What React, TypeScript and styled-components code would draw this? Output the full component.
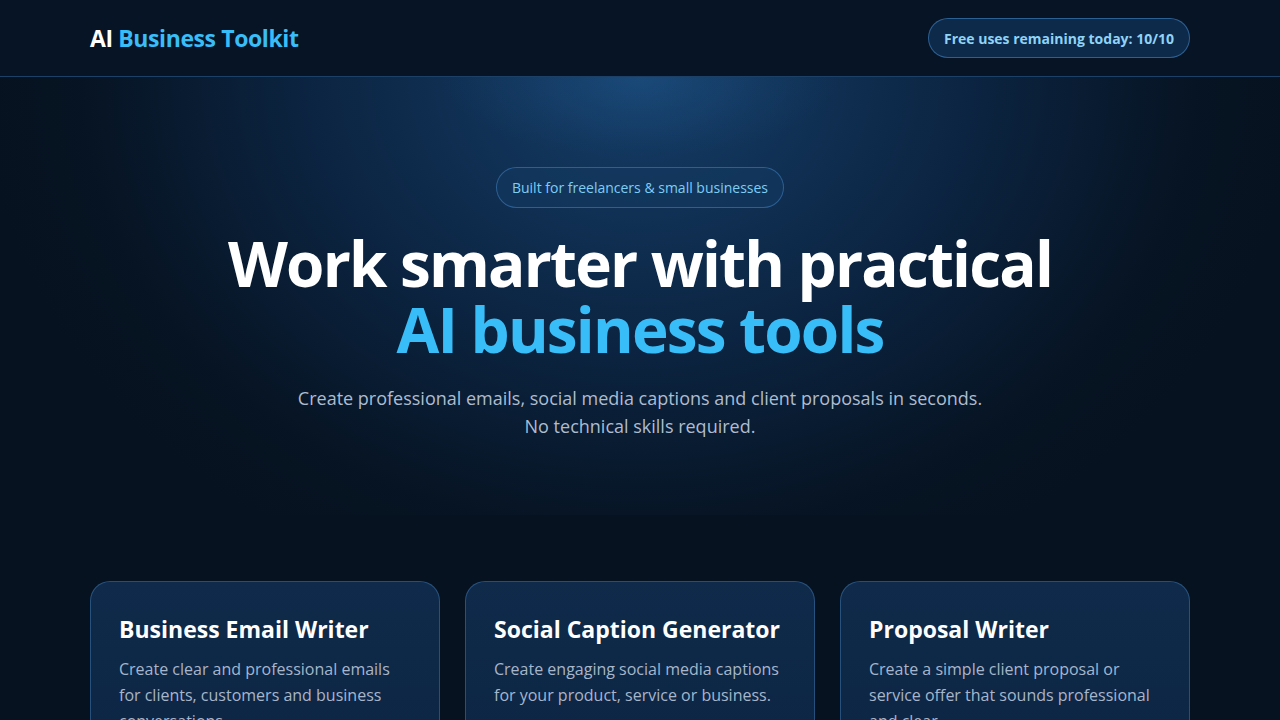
import styled, { createGlobalStyle } from 'styled-components';

const GlobalStyle = createGlobalStyle`
  * {
    box-sizing: border-box;
  }

  body {
    margin: 0;
    background: #06121f;
    font-family: 'Open Sans', 'Noto Sans', sans-serif;
    color: #ffffff;
  }
`;

const Page = styled.div`
  min-height: 100vh;
  background: #06121f;
`;

const Header = styled.header`
  height: 77px;
  background: #061425;
  border-bottom: 1px solid rgba(56, 120, 185, 0.45);
`;

const Container = styled.div`
  width: 1100px;
  margin: 0 auto;
`;

const HeaderInner = styled(Container)`
  height: 100%;
  display: flex;
  align-items: center;
  justify-content: space-between;
`;

const Logo = styled.div`
  font-size: 23px;
  font-weight: 700;
  letter-spacing: -0.4px;
  color: #ffffff;

  span {
    color: #38bdf8;
  }
`;

const UsesBadge = styled.div`
  height: 40px;
  padding: 0 15px;
  display: flex;
  align-items: center;
  border-radius: 999px;
  background: #0d2a4a;
  border: 1px solid rgba(72, 140, 205, 0.55);
  color: #8fd3f7;
  font-size: 14px;
  font-weight: 700;
`;

const Hero = styled.section`
  height: 438px;
  padding-top: 90px;
  display: flex;
  flex-direction: column;
  align-items: center;
  text-align: center;
  background:
    radial-gradient(ellipse 200px 80px at 50% 0%, rgba(45, 115, 180, 0.22), transparent 100%),
    radial-gradient(ellipse 660px 540px at 50% 0%, rgba(22, 66, 112, 0.9) 0%, rgba(14, 44, 80, 0.7) 50%, rgba(8, 24, 45, 0.25) 85%, transparent 100%);
`;

const Pill = styled.div`
  height: 41px;
  padding: 0 15px;
  display: flex;
  align-items: center;
  border-radius: 999px;
  background: rgba(18, 56, 94, 0.7);
  border: 1px solid rgba(72, 140, 205, 0.5);
  color: #7dcdf5;
  font-size: 14px;
`;

const Title = styled.h1`
  margin: 22px 0 0;
  font-size: 62px;
  line-height: 66px;
  font-weight: 700;
  letter-spacing: -1.8px;
  color: #ffffff;
`;

const Accent = styled.span`
  display: block;
  color: #38bdf8;
`;

const Lead = styled.p`
  margin: 22px 0 0;
  font-size: 18px;
  line-height: 28px;
  color: #aebcd0;
`;

const CardGrid = styled(Container)`
  margin-top: 66px;
  display: grid;
  grid-template-columns: repeat(3, 1fr);
  gap: 25px;
`;

const Card = styled.article`
  height: 220px;
  padding: 31px 28px;
  border-radius: 20px;
  background: linear-gradient(180deg, #0f2a4a 0%, #0c2443 100%);
  border: 1px solid rgba(72, 130, 190, 0.45);
`;

const CardTitle = styled.h2`
  margin: 0;
  font-size: 23px;
  line-height: 32px;
  font-weight: 700;
  color: #ffffff;
`;

const CardText = styled.p`
  margin: 11px 0 0;
  font-size: 16px;
  line-height: 26px;
  color: #a7b6ca;
`;

const tools = [
  {
    title: 'Business Email Writer',
    text: 'Create clear and professional emails for clients, customers and business conversations.',
  },
  {
    title: 'Social Caption Generator',
    text: 'Create engaging social media captions for your product, service or business.',
  },
  {
    title: 'Proposal Writer',
    text: 'Create a simple client proposal or service offer that sounds professional and clear.',
  },
];

function App() {
  return (
    <Page>
      <GlobalStyle />
      <Header>
        <HeaderInner>
          <Logo>
            AI <span>Business Toolkit</span>
          </Logo>
          <UsesBadge>Free uses remaining today: 10/10</UsesBadge>
        </HeaderInner>
      </Header>
      <Hero>
        <Pill>Built for freelancers &amp; small businesses</Pill>
        <Title>
          Work smarter with practical
          <Accent>AI business tools</Accent>
        </Title>
        <Lead>
          Create professional emails, social media captions and client proposals in seconds.
          <br />
          No technical skills required.
        </Lead>
      </Hero>
      <CardGrid>
        {tools.map((tool) => (
          <Card key={tool.title}>
            <CardTitle>{tool.title}</CardTitle>
            <CardText>{tool.text}</CardText>
          </Card>
        ))}
      </CardGrid>
    </Page>
  );
}

export default App;
